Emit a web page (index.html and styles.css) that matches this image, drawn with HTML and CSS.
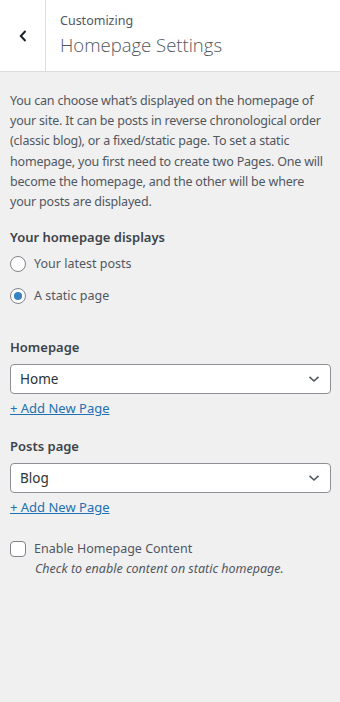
FILE: index.html
```html
<!DOCTYPE html>
<html lang="en">
<head>
<meta charset="UTF-8">
<title>Homepage Settings</title>
<link rel="stylesheet" href="styles.css">
</head>
<body>
<div class="header">
  <div class="back">
    <svg width="10" height="14" viewBox="0 0 10 14"><path d="M7.5 2 L2.8 7 L7.5 12" fill="none" stroke="#1d2327" stroke-width="2"/></svg>
  </div>
  <div class="title">
    <div class="crumb">Customizing</div>
    <div class="name">Homepage Settings</div>
  </div>
</div>

<div class="panel">
  <p class="desc">You can choose what’s displayed on the homepage of<br>
  your site. It can be posts in reverse chronological order<br>
  (classic blog), or a fixed/static page. To set a static<br>
  homepage, you first need to create two Pages. One will<br>
  become the homepage, and the other will be where<br>
  your posts are displayed.</p>

  <div class="label first">Your homepage displays</div>
  <div class="radios">
    <div class="row"><span class="radio"></span>Your latest posts</div>
    <div class="row"><span class="radio checked"></span>A static page</div>
  </div>

  <div class="label page">Homepage</div>
  <div class="select">Home
    <svg width="12" height="8" viewBox="0 0 12 8"><path d="M1.5 1.8 L6 6 L10.5 1.8" fill="none" stroke="#50575e" stroke-width="1.6"/></svg>
  </div>
  <a class="add" href="#">+ Add New Page</a>

  <div class="label page second">Posts page</div>
  <div class="select">Blog
    <svg width="12" height="8" viewBox="0 0 12 8"><path d="M1.5 1.8 L6 6 L10.5 1.8" fill="none" stroke="#50575e" stroke-width="1.6"/></svg>
  </div>
  <a class="add" href="#">+ Add New Page</a>

  <div class="row check-row"><span class="check"></span>Enable Homepage Content</div>
  <div class="hint">Check to enable content on static homepage.</div>
</div>
</body>
</html>
```

FILE: styles.css
```css
body {
  margin: 0;
  background: #f0f0f1;
  font-family: 'Noto Sans', sans-serif;
  font-size: 12.5px;
  color: #50575e;
}
.header {
  display: flex;
  height: 71px;
  background: #fff;
  border-bottom: 1px solid #dcdcde;
}
.back {
  width: 45px;
  border-right: 1px solid #dcdcde;
  display: flex;
  align-items: center;
  justify-content: center;
}
.title {
  padding: 11px 0 0 14px;
}
.crumb {
  font-size: 12.5px;
  line-height: 20px;
}
.name {
  font-family: 'Open Sans', sans-serif;
  font-size: 18.5px;
  font-weight: 300;
  line-height: 26px;
  margin-top: 1px;
}
.panel {
  padding: 0 9px 0 10px;
}
.desc {
  margin: 19px 0 0;
  line-height: 20.2px;
  letter-spacing: -0.2px;
  white-space: nowrap;
}
.label {
  font-weight: 600;
  font-size: 13px;
  line-height: 20px;
  color: #3c434a;
}
.label.first {
  margin-top: 15px;
}
.label.page {
  margin-top: 31px;
}
.label.second {
  margin-top: 18px;
}
.radios {
  display: flex;
  flex-direction: column;
  gap: 12px;
  margin-top: 7px;
}
.row {
  display: flex;
  align-items: center;
  height: 20px;
  line-height: 20px;
}
.radio, .check {
  width: 14px;
  height: 14px;
  border: 1px solid #7e8389;
  background: #fff;
  border-radius: 50%;
  margin-right: 8px;
  display: flex;
  align-items: center;
  justify-content: center;
}
.radio.checked::after {
  content: "";
  width: 8px;
  height: 8px;
  border-radius: 50%;
  background: #3582c4;
}
.check {
  border-radius: 4px;
}
.select {
  margin-top: 7px;
  height: 28px;
  border: 1px solid #8c8f94;
  border-radius: 4px;
  background: #fff;
  display: flex;
  align-items: center;
  justify-content: space-between;
  padding: 0 10px 0 9px;
  font-size: 13.5px;
  color: #2c3338;
}
.add {
  display: block;
  margin-top: 4px;
  line-height: 20px;
  color: #2271b1;
  font-size: 13px;
}
.check-row {
  margin-top: 22px;
}
.hint {
  font-style: italic;
  line-height: 20px;
  padding-left: 25px;
}
```
